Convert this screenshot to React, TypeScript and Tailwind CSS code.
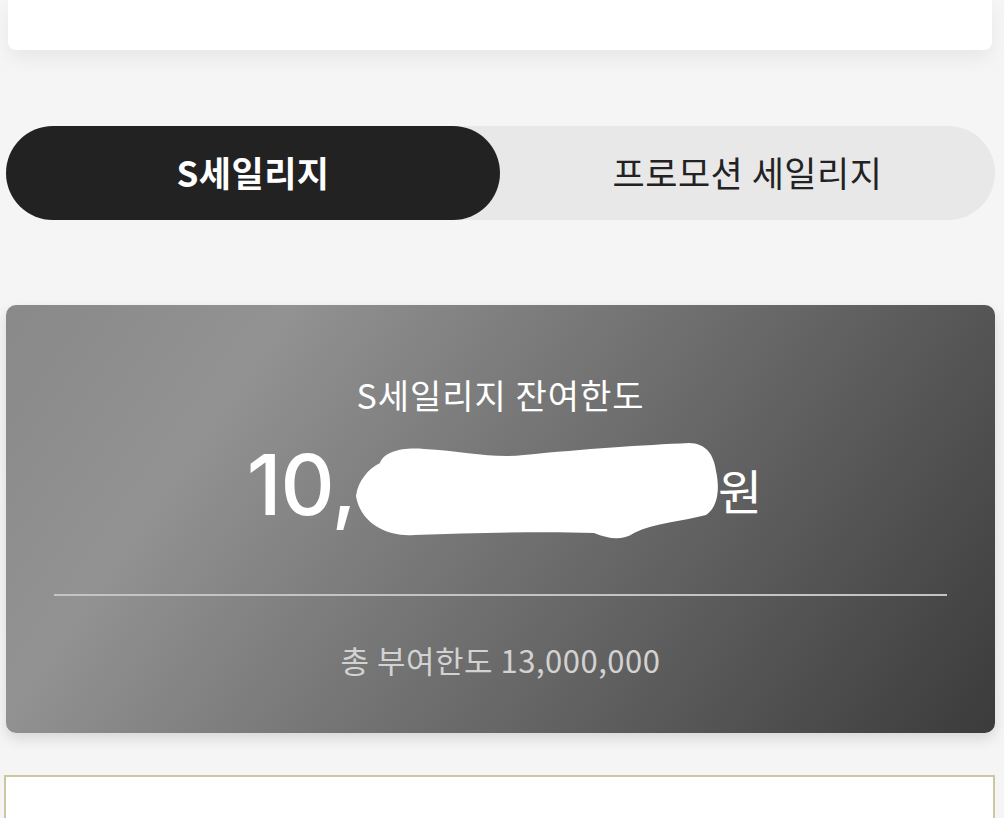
import React from 'react';

const KR = { fontFamily: '"Noto Sans CJK KR", "Noto Sans", sans-serif' };

// white scribble that hides the middle digits
const Blob = () => (
  <svg viewBox="0 0 366 100" className="w-[366px] h-[100px] shrink-0 -ml-[2px] translate-y-[6px] overflow-visible">
    <path
      d="M 2 55 C 4 40, 14 28, 26 22 C 30 10, 50 6, 70 8 C 110 10, 140 18, 170 14 C 230 8, 290 4, 335 2 C 352 2, 360 14, 362 30 C 366 48, 364 66, 352 74 C 330 80, 300 82, 280 92 C 268 100, 255 98, 240 92 C 190 90, 120 92, 60 94 C 30 96, 6 80, 2 55 Z"
      fill="#ffffff"
    />
  </svg>
);

export default function App() {
  return (
    <div className="min-h-[818px] bg-[#f5f5f5] overflow-hidden" style={KR}>
      {/* top white card */}
      <div className="ml-[8px] w-[984px] h-[50px] bg-white rounded-b-lg shadow-[0_10px_18px_rgba(0,0,0,0.05)]" />

      {/* tabs */}
      <div className="mt-[76px] ml-[6px] w-[989px] h-[94px] rounded-full bg-[#e8e8e8] flex">
        <div className="w-[494px] h-full rounded-full bg-[#222222] flex items-center justify-center pb-[4px]">
          <span className="text-[35px] font-bold text-white leading-none tracking-[0.5px]">S세일리지</span>
        </div>
        <div className="flex-1 flex items-center justify-center pb-[4px]">
          <span className="text-[35px] text-[#222222] leading-none tracking-[0.5px]">프로모션 세일리지</span>
        </div>
      </div>

      {/* balance card */}
      <div className="mt-[85px] ml-[6px] w-[989px] h-[428px] rounded-[10px] bg-[linear-gradient(125deg,#898989_0%,#929292_22%,#3b3b3b_100%)] shadow-[0_6px_14px_rgba(0,0,0,0.12)] pt-[70px] flex flex-col items-center">
        <div className="text-[34px] leading-[40px] text-white tracking-[1px]">S세일리지 잔여한도</div>
        <div className="mt-[20px] ml-[8px] h-[100px] flex items-center justify-center text-white">
          <span className="text-[84px] leading-none font-medium tracking-[-1px]" style={{ fontFamily: 'Inter, "Noto Sans", sans-serif' }}>10,</span>
          <Blob />
          <span className="-ml-[2px] text-[48px] leading-none mt-[8px]">원</span>
        </div>
        <div className="mt-[59px] w-[893px] h-[2px] bg-[#c4c4c4]" />
        <div className="mt-[45px] text-[31px] leading-[38px] text-[#d2d2d2] tracking-[0.5px]">총 부여한도 13,000,000</div>
      </div>

      {/* bottom box */}
      <div className="mt-[42px] ml-[4px] w-[991px] h-[100px] bg-white border-2 border-[#cbc79e]" />
    </div>
  );
}
